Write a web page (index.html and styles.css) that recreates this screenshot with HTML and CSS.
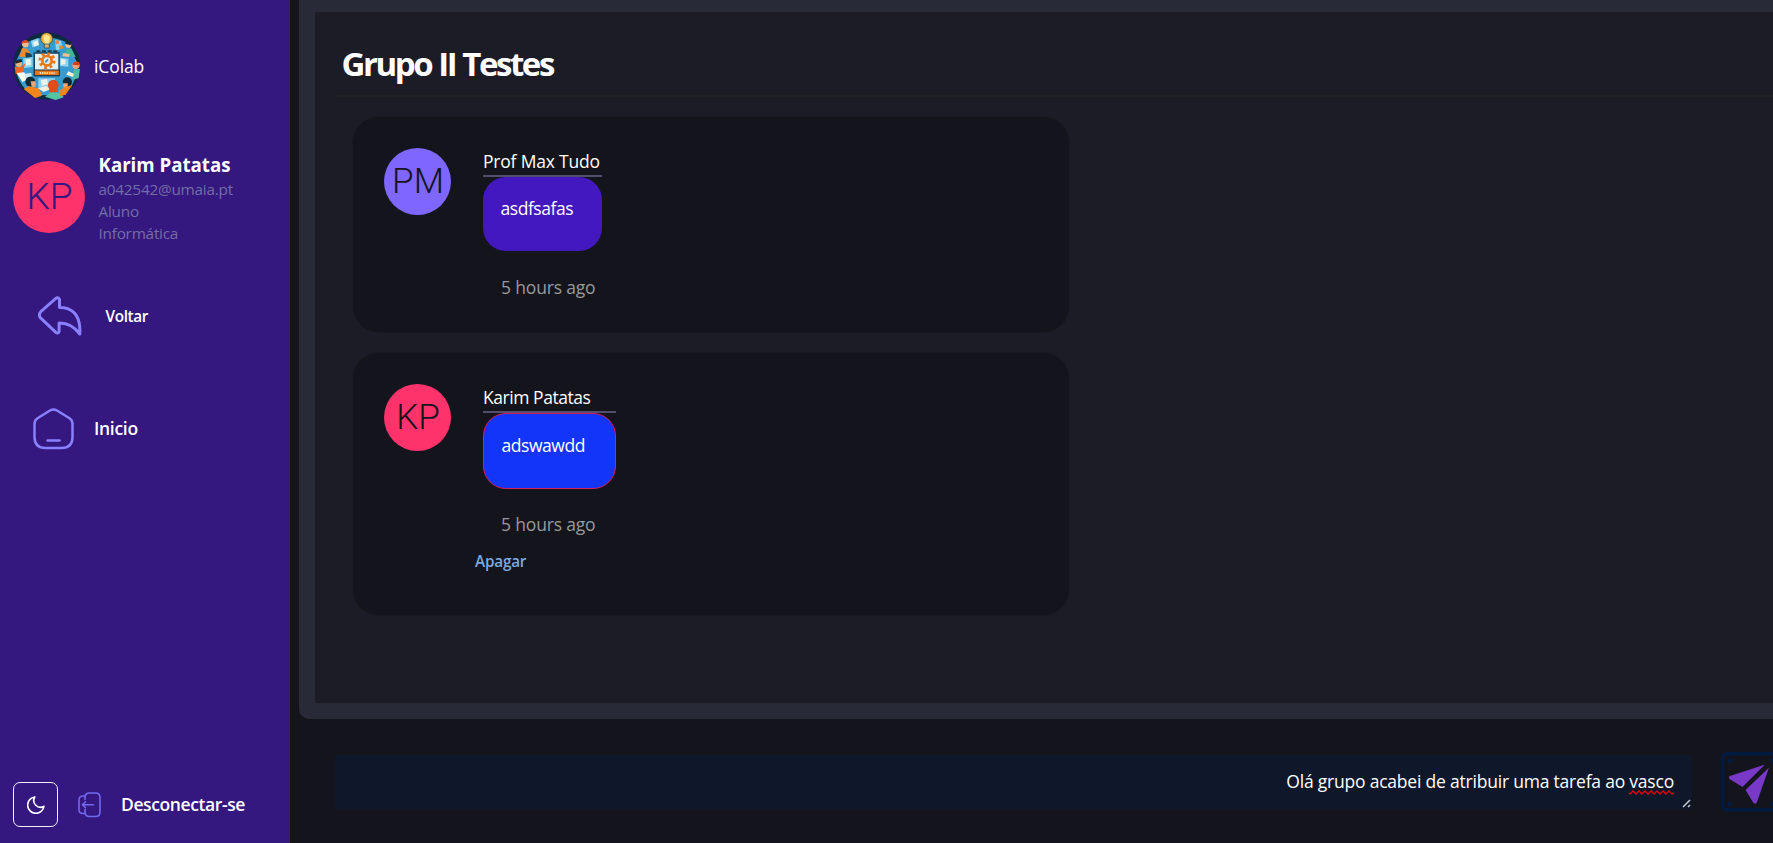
FILE: index.html
```html
<!DOCTYPE html>
<html lang="pt">
<head>
<meta charset="utf-8">
<title>iColab</title>
<link rel="stylesheet" href="styles.css">
</head>
<body>
<div class="app">
  <aside class="sidebar">
    <div class="brand">
      <svg class="brand-logo" viewBox="24 21 204 204">
        <circle cx="125" cy="123" r="101" fill="#0c2b3f"/>
        <path d="M60 55Q125 20 190 55L218 118Q215 170 190 195Q125 225 65 197Q32 165 30 115z" fill="#379bd0"/>
        <path d="M78 48l22-9 2 22-20 6zM150 45l18 3 5 22-20 8zM55 100l28-4v30l-28 4zM165 98l25 3v24l-25-2zM100 160h50v30h-50z" fill="#8fd3ef"/>
        <path d="M84 52l14-6 3 14-13 5zM62 104l14-3 2 18-15 3zM168 102l14 2-1 14-13 1zM108 165l18-3 3 16-19 4z" fill="#eaf3ea"/>
        <path d="M88 84h74v68h-74z" fill="#dff1f2" stroke="#14405f" stroke-width="4"/>
        <path d="M88 135h75v17h-75z" fill="#ec7418" stroke="#12334a" stroke-width="3"/>
        <path d="M104 144h45" stroke="#ffe1b5" stroke-width="6" stroke-dasharray="4 3"/>
        <circle cx="126" cy="107" r="20" fill="none" stroke="#e97819" stroke-width="11" stroke-dasharray="8 7.7"/>
        <circle cx="126" cy="107" r="14" fill="#d9eef0" stroke="#e97819" stroke-width="8"/>
        <path d="M121 112l8-9" stroke="#3d8fb5" stroke-width="5"/>
        <path d="M94 79h66" stroke="#153b50" stroke-width="6" stroke-dasharray="12 5"/>
        <circle cx="125" cy="41" r="18" fill="#f5b341" stroke="#14334a" stroke-width="2"/>
        <path d="M115 34q10-9 20 1l-4 23h-11z" fill="#ffe796"/>
        <path d="M118 57h15v12h-15z" fill="#cdb67d" stroke="#253a45" stroke-width="2"/>
        <circle cx="156" cy="52" r="6" fill="#e88639"/><circle cx="168" cy="67" r="6" fill="#d98940"/>
        <circle cx="61" cy="57" r="10" fill="#f2bd8f"/><path d="M49 56q3-13 16-11l8 8-16 1z" fill="#dc4b20"/>
        <path d="M43 95l8-26 15 2 14 20-19 5z" fill="#f08a2b"/><path d="M61 82l17 4 4 9-20 3z" fill="#1a4154"/>
        <circle cx="190" cy="60" r="9" fill="#f2bd8f"/><path d="M180 56q4-13 19-8l-2 13z" fill="#102936"/>
        <path d="M183 73l16-3 13 26-34-2z" fill="#42b698"/><path d="M175 84l19 3-2 9-20-2z" fill="#f2bd8f"/>
        <circle cx="42" cy="117" r="9" fill="#f2b184"/><path d="M31 116q0-15 19-13l2 7z" fill="#102936"/>
        <path d="M29 125l17 2 15-12-9 28-20 5z" fill="#ef671e"/>
        <path d="M35 144l23-2 9 22-15 7z" fill="#fff"/><path d="M58 146l20-2 3 10-20 5z" fill="#d0eaf1"/>
        <circle cx="213" cy="121" r="11" fill="#f0a374"/><path d="M203 120q1-14 19-9l3 10z" fill="#d83c19"/>
        <path d="M207 134l18-3-4 29-20 4z" fill="#4dc0a1"/><path d="M190 139l17 8-4 9-19-7z" fill="#fff0d5"/>
        <circle cx="76" cy="170" r="15" fill="#102b37"/><path d="M77 169h15v16H80z" fill="#e9a678"/>
        <path d="M56 192l14-8 32 6 9 22-21 7z" fill="#f0851e"/>
        <path d="M99 190l24-7 13 10-20 8z" fill="#f5eedc"/>
        <circle cx="145" cy="180" r="16" fill="#d94b20"/><path d="M130 178l12-12 17 12-1 23-24 3z" fill="#e14c18"/>
        <path d="M120 215l17-13 30 2 9 13-24 8z" fill="#54c5a3"/>
        <circle cx="187" cy="171" r="14" fill="#102936"/><path d="M174 175h14v13h-12z" fill="#eda678"/>
        <path d="M161 198l19-12 22-6-20 29-16 5z" fill="#ee851d"/>
      </svg>
      <span class="brand-name">iColab</span>
    </div>

    <div class="profile">
      <svg class="profile-avatar" viewBox="0 0 72 72"><circle cx="36" cy="36" r="36" fill="#ff336c"/><text x="36.5" y="48" class="initials initials-profile">KP</text></svg>
      <div class="profile-info">
        <div class="profile-name">Karim Patatas</div>
        <div class="profile-line">a042542@umaia.pt</div>
        <div class="profile-line">Aluno</div>
        <div class="profile-line">Informática</div>
      </div>
    </div>

    <nav class="nav">
      <a class="nav-item back">
        <svg class="icon-back" viewBox="0 0 44 40"><path d="M21.5 3.2Q20 .8 17.7 2.5L2.8 15.7Q-.1 18.8 2.8 22.2L17.6 36.2Q20.1 38.1 21.1 35.5V27Q33.5 26.7 41.8 38Q43 17.5 29.5 12.7Q25.5 11.3 21.5 11.5z"/></svg>
        <span>Voltar</span>
      </a>
      <a class="nav-item home">
        <svg class="icon-home" viewBox="0 0 41 42"><path d="M17 2.5Q20.5.5 24 2.5L36.5 10.2Q39.5 12 39.5 16V29Q39.5 40 28.5 40H12.5Q1.5 40 1.5 29V16Q1.5 12 4.5 10.2z"/><path d="M14.5 32.5h12"/></svg>
        <span>Inicio</span>
      </a>
    </nav>

    <div class="sidebar-footer">
      <button class="theme-btn">
        <svg viewBox="0 0 18 18"><path d="M7.8 1A8.2 8.2 0 1 0 17 10.2A6.7 6.7 0 0 1 7.8 1z"/></svg>
      </button>
      <svg class="icon-logout" viewBox="0 0 23 26"><path d="M7 7.5V5.5Q7 1 11.5 1H17.5Q22 1 22 5.5V20Q22 24.5 17.5 24.5H11.5Q7 24.5 7 20V17.5M7 4H5Q1 4 1 8V17.5Q1 21.5 5 21.5H7M15.5 12.8H4.5M7.5 9.8L4.5 12.8L7.5 15.8"/></svg>
      <span class="logout">Desconectar-se</span>
    </div>
  </aside>

  <main class="main">
    <section class="board">
      <h1 class="title"><span>Grupo II Testes</span></h1>
      <article class="card">
        <svg class="avatar" viewBox="0 0 67 67"><circle cx="33.5" cy="33.5" r="33.5" fill="#7f66ff"/><text x="34" y="44.5" class="initials">PM</text></svg>
        <div class="message">
          <div class="author"><span>Prof Max Tudo</span></div>
          <div class="bubble"><span>asdfsafas</span></div>
          <div class="time">5 hours ago</div>
        </div>
      </article>
      <article class="card own">
        <svg class="avatar" viewBox="0 0 67 67"><circle cx="33.5" cy="33.5" r="33.5" fill="#ff336c"/><text x="34" y="44.5" class="initials">KP</text></svg>
        <div class="message">
          <div class="author"><span>Karim Patatas</span></div>
          <div class="bubble"><span>adswawdd</span></div>
          <div class="time">5 hours ago</div>
          <a class="delete">Apagar</a>
        </div>
      </article>
    </section>

    <form class="composer">
      <div class="field"><span class="draft">Olá grupo acabei de atribuir uma tarefa ao <span class="misspelt">vasco<svg class="squiggle" viewBox="0 0 45 5"><path d="M0 3.5L1.5 3.5L4 1L7 4L10 1L13 4L16 1L19 4L22 1L25 4L28 1L31 4L34 1L37 4L40 1L43 4L45 2.5"/></svg></span></span>
        <svg class="grip" viewBox="0 0 9 9"><path d="M1 8L8 1M6 8L8 6" /></svg>
      </div>
      <div class="send">
        <svg viewBox="0 0 60 60"><rect x="1.7" y="1.7" width="56" height="56" rx="4" fill="none" stroke="#001a40" stroke-width="3.4"/><g fill="#001a40"><circle cx="8.5" cy="8.5" r="2.5"/><circle cx="52" cy="8.5" r="2.5"/><circle cx="8.5" cy="52" r="2.5"/><circle cx="52" cy="52" r="2.5"/></g><g fill="#7838c8"><path d="M44 12.5L9 24Q7 25 8.5 27L21.5 35z"/><path d="M48 15.5L24.5 38L32.5 51Q35 53 36 50z"/></g></svg>
      </div>
    </form>
  </main>
</div>
</body>
</html>
```
FILE: styles.css
```css
* { box-sizing: border-box; }
body {
  margin: 0;
  background: #14141d;
  color: #fff;
  font-family: "Open Sans", "Noto Sans", sans-serif;
  font-size: 17.5px;
  overflow: hidden;
}
svg { display: block; flex: none; }
span { white-space: nowrap; }
.app { display: flex; width: 1773px; height: 843px; overflow: hidden; }

.sidebar {
  width: 290px;
  flex: none;
  display: flex;
  flex-direction: column;
  background: #34187f;
  padding: 32px 13px 16px;
}
.brand { display: flex; align-items: center; height: 68px; gap: 13px; }
.brand-logo { width: 68px; height: 68px; }
.brand-name { letter-spacing: -0.1px; }
.profile { display: flex; gap: 13.5px; margin-top: 51px; height: 93px; }
.profile-avatar { width: 72px; height: 72px; margin-top: 10px; }
.profile-name { font-weight: 700; font-size: 18.7px; line-height: 27px; height: 27px; letter-spacing: -0.02px; white-space: nowrap; }
.profile-line { font-size: 15.3px; line-height: 22px; color: #746da8; letter-spacing: -0.22px; }
.initials { font-family: Roboto, Inter, sans-serif; font-size: 35px; text-anchor: middle; fill: #14141d; font-weight: 300; }
.initials-profile { font-size: 37px; fill: #34187f; }

.nav { display: flex; flex-direction: column; font-weight: 600; }
.nav-item { display: flex; align-items: center; }
.nav svg { fill: none; stroke: #8880ff; stroke-width: 3; stroke-linecap: round; stroke-linejoin: round; }
.back { margin-top: 52px; padding-left: 25px; height: 40px; gap: 23.5px; font-size: 15.3px; letter-spacing: -0.35px; }
.icon-back { width: 44px; height: 40px; }
.home { margin-top: 72px; padding-left: 20px; height: 42px; gap: 20px; font-size: 17.5px; letter-spacing: -0.3px; }
.home span { padding-bottom: 2px; }
.icon-home { width: 41px; height: 42px; }
.nav .icon-home { stroke-width: 2.5; }

.sidebar-footer { margin-top: auto; display: flex; align-items: center; height: 45px; }
.theme-btn {
  width: 45px; height: 45px; padding: 0;
  display: grid; place-items: center;
  background: none;
  border: 1px solid #f3f1fa;
  border-radius: 7px;
}
.theme-btn svg { width: 18px; height: 18px; fill: none; stroke: #fff; stroke-width: 1.6; stroke-linejoin: round; }
.icon-logout { width: 23px; height: 26px; margin: 0 20px; fill: none; stroke: #7268f0; stroke-width: 1.6; stroke-linecap: round; stroke-linejoin: round; }
.logout { font-weight: 600; letter-spacing: -0.4px; line-height: 24px; padding-bottom: 2px; }

.main { flex: none; width: 1500px; padding-left: 9px; }
.board {
  height: 719px;
  border: 16px solid #292a38;
  border-top-width: 12px;
  border-radius: 0 0 0 10px;
  background: #1c1c27;
  padding-left: 19px;
}
.title {
  margin: 0 0 19px;
  height: 85px;
  border-bottom: 2px solid #202024;
  padding: 28px 0 0 7.5px;
  font-size: 33px;
  line-height: 48px;
  font-weight: 700;
  letter-spacing: -2.45px;
  word-spacing: 1px;
}
.card {
  display: flex;
  width: 718px;
  height: 217px;
  margin: 0 0 19px 18px;
  padding: 31px;
  background: #14141d;
  border: 1px solid #1a1a1e;
  border-radius: 27px;
}
.own { height: 264px; }
.avatar { width: 67px; height: 67px; }
.message { padding-left: 32px; display: flex; flex-direction: column; align-items: flex-start; }
.author {
  height: 29px;
  line-height: 26px;
  align-self: stretch;
  border-bottom: 2px solid #524e6c;
  letter-spacing: -0.2px;
}
.own .author { letter-spacing: -0.45px; }
.bubble {
  width: 119px;
  height: 74px;
  padding: 18px 17.5px;
  line-height: 27px;
  letter-spacing: -0.45px;
  background: #4318be;
  border-radius: 23px;
}
.own .bubble { width: 133px; height: 76px; background: #1235f8; border: 1px solid #d81e5b; }
.time { margin: 23px 0 0 18px; line-height: 27px; letter-spacing: -0.17px; color: #999; }
.own .time { margin-top: 22px; }
.delete { margin: 12px 0 0 -8px; line-height: 22px; font-size: 15.3px; letter-spacing: -0.2px; font-weight: 600; color: #7fa8df; }

.composer { display: flex; padding: 33px 0 0 36px; }
.field {
  position: relative;
  width: 1357px;
  height: 54px;
  margin-top: 3px;
  padding-right: 18px;
  background: #0f172a;
  text-align: right;
  line-height: 52px;
  letter-spacing: -0.21px;
}
.misspelt { position: relative; }
.squiggle { position: absolute; left: 0; bottom: -2px; width: 45px; height: 5px; fill: none; stroke: #e80000; stroke-width: 1.3; }
.grip { position: absolute; right: 1px; bottom: 1px; width: 9px; height: 9px; fill: none; stroke: #c5c8cf; stroke-width: 1.5; }
.send { margin-left: 29px; }
.send svg { width: 60px; height: 60px; }
```
